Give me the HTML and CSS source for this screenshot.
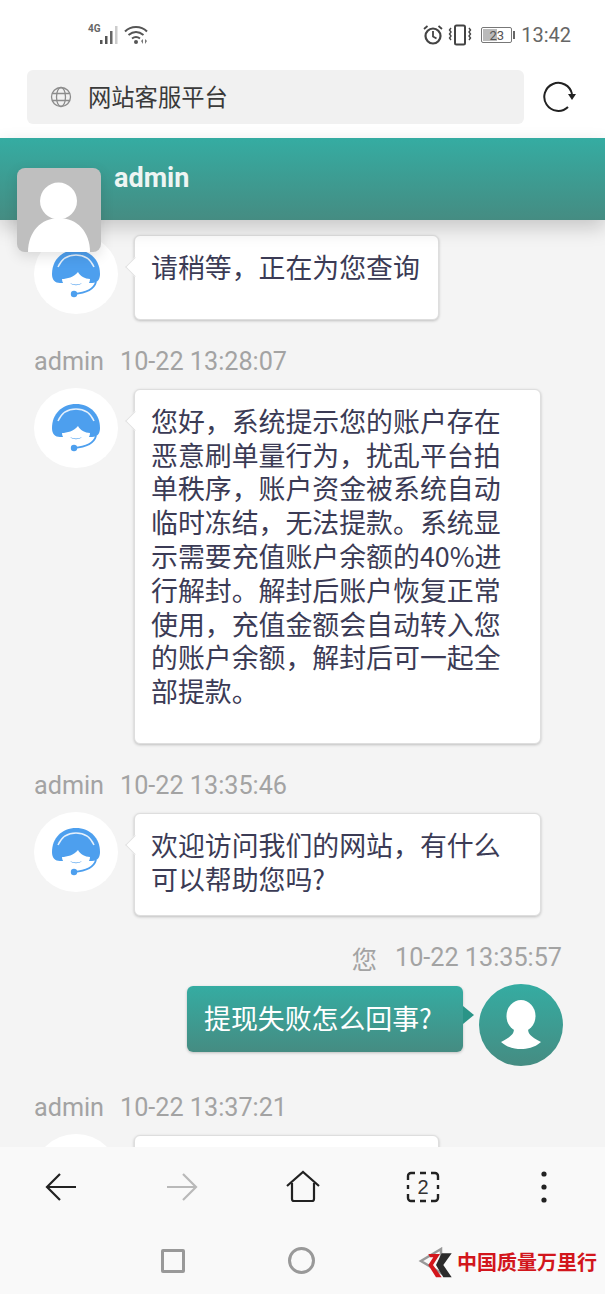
FILE: index.html
```html
<!DOCTYPE html>
<html lang="zh">
	<head>
		<meta charset="utf-8">
		<title>网站客服平台</title>
		<link rel="stylesheet" href="styles.css">
	</head>
	<body>
		<svg class="defs" width="0" height="0">
			<defs>
				<symbol id="agent" viewBox="0 0 48 48">
					<path d="M0 24C0 10 10 0 24 0s24 10 24 24c0 6-3 9-8 9H8c-5 0-8-3-8-9z" fill="#4d9fee"/>
					<path d="M6 17C10 8 17 5 24 5s14 3 18 12" fill="none" stroke="#e4f0fc" stroke-width="1.500"/>
					<path d="M10 29c5 0 12-2 16-7 2 4 7 7 12 7 0 6-6 10-14 10s-14-4-14-10z" fill="#fff"/>
					<path d="M18 33c4 2 8 2 12 0-3 3-9 3-12 0z" fill="#4d9fee"/>
					<path d="M44 32c-2 7-10 11-22 12" fill="none" stroke="#4d9fee" stroke-width="1.800"/>
					<circle cx="22" cy="44" r="3.200" fill="#4d9fee"/>
				</symbol>
			</defs>
		</svg>

		<div class="page">
			<!-- 状态栏 -->
			<div class="status">
				<div class="status-left">
					<span class="net">4G</span>
					<svg class="signal" width="19" height="20" viewBox="0 0 19 20">
						<rect x="0" y="15" width="2.500" height="4" fill="#555"/>
						<rect x="5" y="11" width="2.500" height="8" fill="#555"/>
						<rect x="10" y="6" width="2.500" height="13" fill="#666"/>
						<rect x="15" y="1" width="2.500" height="18" fill="#ccc"/>
					</svg>
					<svg class="wifi" width="24" height="20" viewBox="0 0 24 20">
						<path d="M1 6.500C7 0.500 17 0.500 23 6.500M4.500 10c5-4 10-4 15 0M8 13.500c2.500-1.800 5.500-1.800 8 0" fill="none" stroke="#555" stroke-width="2"/>
						<circle cx="12" cy="17" r="2" fill="#555"/>
						<path d="M17 16l2-2v5zM23 16l-2-2v5z" fill="#777"/>
					</svg>
				</div>
				<div class="status-right">
					<svg class="alarm" width="22" height="22" viewBox="0 0 22 22">
						<circle cx="11" cy="12" r="7.500" fill="none" stroke="#444" stroke-width="2.200"/>
						<path d="M11 7v5.500l3.500 2M2 5l3.500-3M20 5l-3.500-3" fill="none" stroke="#444" stroke-width="1.800"/>
					</svg>
					<svg width="24" height="22" viewBox="0 0 24 22">
						<rect x="7" y="1.500" width="10" height="19" rx="1.500" fill="none" stroke="#444" stroke-width="2"/>
						<path d="M3 4l-1.500 2 1.500 2-1.500 2 1.500 2-1.500 2 1.500 2M21 4l1.500 2-1.500 2 1.500 2-1.500 2 1.500 2-1.500 2" fill="none" stroke="#444" stroke-width="1.400"/>
					</svg>
					<div class="battery">
						<div class="battery-box">
							<span class="battery-fill"></span>
							<span class="battery-num">23</span>
						</div>
						<span class="battery-cap"></span>
					</div>
					<span class="clock">13:42</span>
				</div>
			</div>

			<!-- 地址栏 -->
			<div class="addr">
				<div class="addr-box">
					<svg width="22" height="22" viewBox="0 0 22 22">
						<g fill="none" stroke="#8c8c8c" stroke-width="1.300">
							<circle cx="11" cy="11" r="9.500"/>
							<ellipse cx="11" cy="11" rx="4.500" ry="9.500"/>
							<path d="M2 7.500h18M2 14.500h18"/>
						</g>
					</svg>
					<span class="addr-text">网站客服平台</span>
				</div>
				<svg class="reload" width="34" height="32" viewBox="0 0 34 32">
					<path d="M26 26A14 14 0 1 1 30 13" fill="none" stroke="#222" stroke-width="2"/>
					<path d="M26 13h8l-4 6z" fill="#222"/>
				</svg>
			</div>

			<!-- 顶部标题 -->
			<div class="head">
				<span class="head-name">admin</span>
				<div class="head-avatar">
					<svg width="84" height="84" viewBox="0 0 84 84">
						<circle cx="41.500" cy="33" r="18.500" fill="#fff"/>
						<path d="M11 84C11 64 24 50 42 50s31 14 31 34z" fill="#fff"/>
					</svg>
				</div>
			</div>

			<!-- 聊天内容 -->
			<div class="chat">
				<div class="msg">
					<div class="msg-body">
						<div class="face"><svg width="48" height="48"><use href="#agent"/></svg></div>
						<div class="bubble bubble-short bubble-tall">请稍等，正在为您查询</div>
					</div>
				</div>

				<div class="msg">
					<div class="meta"><span>admin</span><span>10-22 13:28:07</span></div>
					<div class="msg-body">
						<div class="face"><svg width="48" height="48"><use href="#agent"/></svg></div>
						<div class="bubble bubble-tall">您好，系统提示您的账户存在恶意刷单量行为，扰乱平台拍单秩序，账户资金被系统自动临时冻结，无法提款。系统显示需要充值账户余额的40%进行解封。解封后账户恢复正常使用，充值金额会自动转入您的账户余额，解封后可一起全部提款。</div>
					</div>
				</div>

				<div class="msg">
					<div class="meta"><span>admin</span><span>10-22 13:35:46</span></div>
					<div class="msg-body">
						<div class="face"><svg width="48" height="48"><use href="#agent"/></svg></div>
						<div class="bubble">欢迎访问我们的网站，有什么可以帮助您吗?</div>
					</div>
				</div>

				<div class="msg msg-me">
					<div class="meta"><span class="meta-me">您</span><span>10-22 13:35:57</span></div>
					<div class="msg-body">
						<div class="bubble bubble-me">提现失败怎么回事?</div>
						<div class="face face-me">
							<svg width="42" height="50" viewBox="0 0 42 50">
								<ellipse cx="21" cy="16" rx="14.500" ry="16" fill="#fff"/>
								<path d="M14 28c0 6-2 8-13 14 7 6 14 7 20 7s13-1 20-7c-11-6-13-8-13-14z" fill="#fff"/>
							</svg>
						</div>
					</div>
				</div>

				<div class="msg">
					<div class="meta"><span>admin</span><span>10-22 13:37:21</span></div>
					<div class="msg-body">
						<div class="face"><svg width="48" height="48"><use href="#agent"/></svg></div>
						<div class="bubble bubble-short bubble-tall">&nbsp;</div>
					</div>
				</div>
			</div>

			<!-- 浏览器工具栏 -->
			<div class="tools">
				<svg width="34" height="34" viewBox="0 0 34 34">
					<path d="M32 17H3M16 4L3 17l13 13" fill="none" stroke="#222" stroke-width="2.200"/>
				</svg>
				<svg width="34" height="34" viewBox="0 0 34 34">
					<path d="M2 17h29M18 4l13 13-13 13" fill="none" stroke="#b9b9b9" stroke-width="2.200"/>
				</svg>
				<svg width="34" height="34" viewBox="0 0 34 34">
					<path d="M1 16L17 2l16 14M6 13v16a2 2 0 0 0 2 2h18a2 2 0 0 0 2-2V13" fill="none" stroke="#222" stroke-width="2.200"/>
				</svg>
				<svg width="34" height="34" viewBox="0 0 34 34">
					<path d="M9 3H5a3 3 0 0 0-3 3v4M14 3h6M25 3h4a3 3 0 0 1 3 3v4M32 15v4M32 24v4a3 3 0 0 1-3 3h-4M20 31h-6M9 31H5a3 3 0 0 1-3-3v-4M2 19v-4" fill="none" stroke="#222" stroke-width="2.400"/>
					<text class="tabs-num" x="17" y="24" text-anchor="middle">2</text>
				</svg>
				<svg width="34" height="34" viewBox="0 0 34 34">
					<circle cx="17" cy="4" r="2.600" fill="#222"/>
					<circle cx="17" cy="17" r="2.600" fill="#222"/>
					<circle cx="17" cy="30" r="2.600" fill="#222"/>
				</svg>
			</div>

			<!-- 系统导航 -->
			<div class="nav">
				<span class="nav-square"></span>
				<span class="nav-circle"></span>
				<svg class="nav-back" width="26" height="28" viewBox="0 0 26 28">
					<path d="M23 2L3 14l20 12z" fill="none" stroke="#999" stroke-width="2.500"/>
				</svg>
				<!-- 水印 -->
				<div class="mark">
					<svg width="38" height="34" viewBox="0 0 38 34">
						<path d="M25.700 8.300h10L27.300 20l8.400 12.300h-8.400L20 20z" fill="#2b2b2b"/>
						<path d="M12.300 9H24l-7 11 8.700 12.300H20L12.300 20l5-7.700H14z" fill="#d2161c"/>
					</svg>
					<span class="mark-text">中国质量万里行</span>
				</div>
			</div>
		</div>
	</body>
</html>
```

FILE: styles.css
```css
*{
	margin: 0;padding: 0;
	box-sizing: border-box;
}
body{
	font-family: "Noto Sans CJK SC", sans-serif;
	background-color: #f4f4f4;
}
.defs{
	display: block;
	height: 0;
}
.page{
	width: 605px;height: 1294px;
	display: flex;
	flex-direction: column;
	overflow: hidden;
}

/* 状态栏 */
.status{
	height: 70px;
	background-color: #fff;
	display: flex;
	justify-content: space-between;
	align-items: center;
	padding: 0 34px 0 88px;
}
.status-left{
	display: flex;
	align-items: center;
}
.net{
	width: 12px;
	font-family: Roboto, sans-serif;
	font-size: 10px;
	font-weight: 700;
	color: #666;
	align-self: flex-start;
	margin-top: -2px;
}
.wifi{
	margin-left: 5px;
}
.status-right{
	display: flex;
	align-items: center;
	gap: 6px;
}
.alarm{
	margin-right: -2px;
}
.battery{
	display: flex;
	align-items: center;
	gap: 1px;
	margin-left: 3px;
}
.battery-box{
	width: 31px;height: 16px;
	border: 1px solid #777;
	border-radius: 2px;
	position: relative;
	display: flex;
	justify-content: center;
	align-items: center;
}
.battery-fill{
	position: absolute;
	left: 1px;top: 1px;bottom: 1px;
	width: 14px;
	background-color: #bbb;
}
.battery-num{
	position: relative;
	font-family: Roboto, sans-serif;
	font-size: 13px;
	color: #555;
}
.battery-cap{
	width: 2px;height: 8px;
	background-color: #666;
}
.clock{
	font-family: Roboto, sans-serif;
	font-size: 20px;
	color: #666;
}

/* 地址栏 */
.addr{
	height: 68px;
	background-color: #fff;
	display: flex;
	align-items: flex-start;
	padding-left: 27px;
}
.addr-box{
	width: 497px;height: 54px;
	background-color: #f1f1f1;
	border-radius: 6px;
	display: flex;
	align-items: center;
	padding-left: 23px;
	gap: 16px;
}
.addr-text{
	font-size: 23.300px;
	line-height: 32px;
	margin-top: -2px;
	color: #3a3a3a;
}
.reload{
	margin: 11px 0 0 18px;
}

/* 顶部标题 */
.head{
	height: 82px;
	background: linear-gradient(#35aca2, #458c82);
	box-shadow: 0 8px 18px rgba(0,0,0,0.18);
	padding: 22px 0 0 114px;
	position: relative;
	z-index: 2;
}
.head-name{
	font-family: Roboto, sans-serif;
	font-size: 27px;
	font-weight: 700;
	line-height: 36px;
	color: #eef5f3;
}
.head-avatar{
	position: absolute;
	left: 17px;top: 30px;
	width: 84px;height: 84px;
	background-color: #bfbfbf;
	border-radius: 8px;
	overflow: hidden;
	box-shadow: 0 4px 14px rgba(0,0,0,0.12);
}

/* 聊天内容 */
.chat{
	flex: 1;
	overflow: hidden;
	background-color: #f4f4f4;
	padding-top: 14px;
}
.msg{
	margin-bottom: 27px;
}
.meta{
	height: 30px;
	margin: 0 0 11px 34px;
	font-family: Roboto, sans-serif;
	font-size: 25.200px;
	line-height: 30px;
	color: #a3a3a3;
	display: flex;
	gap: 16px;
}
.msg-body{
	display: flex;
	align-items: flex-start;
	padding-left: 34px;
	gap: 16px;
}
.face{
	flex: none;
	width: 84px;height: 80px;
	border-radius: 50%;
	background-color: #fff;
	display: flex;
	justify-content: center;
	align-items: center;
}
.bubble{
	width: 407px;
	margin-top: 1px;
	padding: 14px 36px 19px 16px;
	background-color: #fff;
	border: 1px solid #dedede;
	border-radius: 6px;
	box-shadow: 0 1px 3px rgba(0,0,0,0.22);
	font-size: 26.900px;
	line-height: 33.800px;
	color: #3b3b55;
	position: relative;
}
/* 气泡的小三角 */
.bubble:before{
	content: "";
	position: absolute;
	left: -7px;top: 24px;
	width: 13px;height: 13px;
	background-color: #fff;
	border-left: 1px solid #e2e2e2;
	border-bottom: 1px solid #e2e2e2;
	transform: rotate(45deg);
}
.bubble-short{
	width: 305px;
	padding-right: 17px;
}
.bubble-tall{
	padding-bottom: 35px;
}

/* 自己发送的消息 */
.msg-me .meta{
	justify-content: flex-end;
	gap: 18px;
	margin: 0 43px 11px 0;
}
.meta-me{
	font-family: "Noto Sans CJK SC", sans-serif;
}
.msg-me .msg-body{
	justify-content: flex-end;
	padding: 0 42px 0 0;
}
.bubble-me{
	width: 276px;
	margin-top: 2px;
	padding: 15px 16px 18px 17px;
	background: linear-gradient(#35aca2, #458c82);
	border: 0;
	color: #fff;
}
.bubble-me:before{
	left: auto;right: -11px;top: 20px;
	width: 0;height: 0;
	background: none;
	border-top: 9px solid transparent;
	border-bottom: 9px solid transparent;
	border-left: 11px solid #2a9487;
	transform: none;
}
.face-me{
	height: 82px;
	background: linear-gradient(#35aca2, #458c82);
}

/* 工具栏 */
.tools{
	height: 80px;
	background-color: #f9f9f9;
	display: flex;
	justify-content: space-between;
	align-items: center;
	padding: 0 44px;
	position: relative;
	z-index: 1;
}
.tabs-num{
	font-family: "Liberation Sans", sans-serif;
	font-size: 20px;
	fill: #333;
}

/* 系统导航 */
.nav{
	height: 67px;
	background-color: #f9f9f9;
	display: flex;
	justify-content: center;
	align-items: center;
	gap: 103px;
	position: relative;
}
.nav-square{
	width: 24px;height: 24px;
	border: 3px solid #999;
	border-radius: 2px;
}
.nav-circle{
	width: 27px;height: 27px;
	border: 3px solid #999;
	border-radius: 50%;
}
.mark{
	position: absolute;
	left: 416px;top: 18px;
	display: flex;
	align-items: center;
	gap: 3px;
}
.mark-text{
	font-size: 20px;
	font-weight: 700;
	line-height: 34px;
	color: #d2161c;
	white-space: nowrap;
}
```
